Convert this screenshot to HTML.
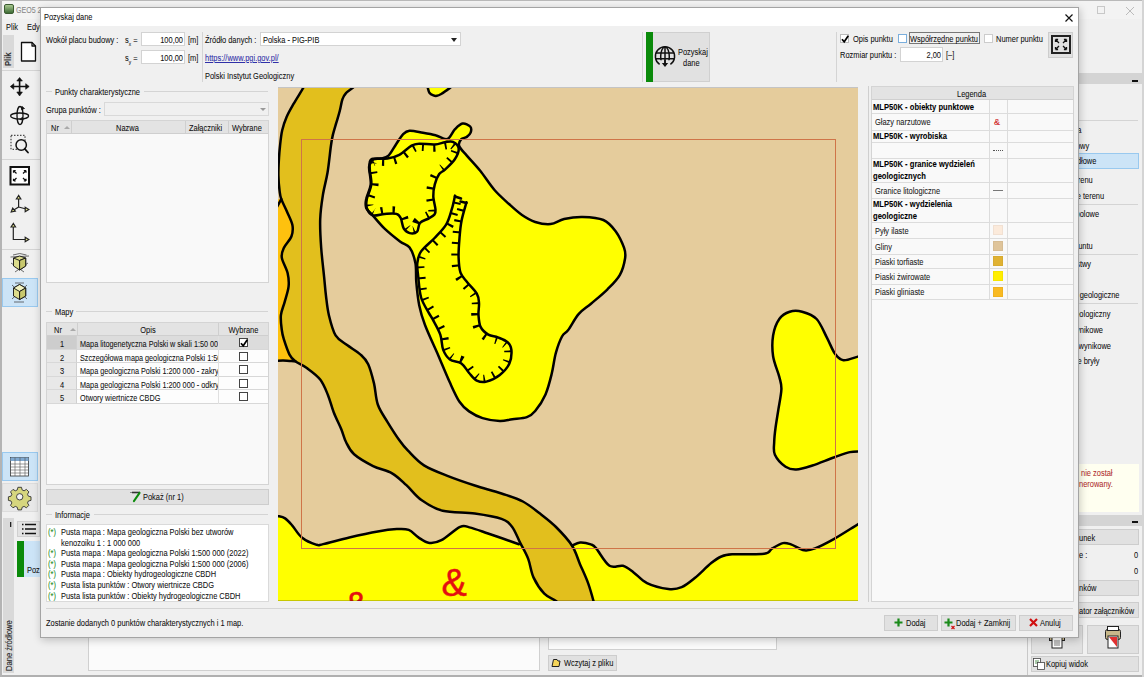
<!DOCTYPE html>
<html><head><meta charset="utf-8">
<style>
*{box-sizing:border-box;margin:0;padding:0}
html,body{width:1144px;height:677px;overflow:hidden;background:#f0f0f0;font-family:"Liberation Sans",sans-serif;font-size:9.5px;color:#111}
.a{position:absolute}
.t{position:absolute;white-space:nowrap;line-height:10px;transform:scaleX(.785);transform-origin:0 0;-webkit-text-stroke:0.07px currentColor}
.r{transform-origin:100% 0}
.c{transform-origin:50% 0;text-align:center}
.inp{position:absolute;background:#fff;border:1px solid #d3d3d3}
.btn{position:absolute;background:#e1e1e1;border:1px solid #cdcdcd}
.hl{position:absolute;background:#cce4f7;border:1px solid #99c9ef}
.vl{position:absolute;width:1px;background:#d4d4d4}
.hln{position:absolute;height:1px;background:#d4d4d4}
.cb{position:absolute;width:9px;height:9px;background:#fff;border:1px solid #333}
</style></head><body>
<!-- ===== background app ===== -->
<div class="a" style="left:0;top:0;width:1144px;height:1px;background:#b9b9b9"></div>
<div class="a" style="left:0;top:1px;width:1144px;height:18px;background:#f3f3f3"></div>
<div class="a" style="left:0;top:675px;width:1144px;height:2px;background:#b0b0b0"></div>
<div class="a" style="left:0;top:0;width:2px;height:677px;background:#b4b4b4"></div>
<div class="a" style="left:1142px;top:0;width:2px;height:677px;background:#d4d4d4"></div>

<!-- app icon + title -->
<div class="a" style="left:4px;top:4px;width:10px;height:10px;border-radius:2px;background:linear-gradient(#a8c890,#3d6b35);border:1px solid #3a5a30"></div>
<div class="t" style="left:16px;top:5px;font-size:9px;color:#888">GEO5 2</div>
<div class="t" style="left:6px;top:22px;">Plik</div>
<div class="t" style="left:27px;top:22px;">Edyc</div>
<!-- right titlebar -->
<div class="a" style="left:1097px;top:6px;width:8px;height:8px;border:1px solid #c8c8c8"></div>
<svg class="a" style="left:1125px;top:6px" width="10" height="10"><path d="M1,1 L9,9 M9,1 L1,9" stroke="#bbb" stroke-width="1"/></svg>

<!-- left tool strip -->
<div class="a" style="left:3px;top:35px;width:11px;height:33px;background:#d9d9d9"></div>
<div class="t" style="left:3px;top:66px;transform:rotate(-90deg) scaleX(.85);transform-origin:0 0;font-size:9px;font-weight:bold;color:#333">Plik</div>
<div class="hln" style="left:2px;top:70px;width:38px"></div>
<div class="hln" style="left:2px;top:159px;width:38px"></div>
<div class="hln" style="left:2px;top:249px;width:38px"></div>
<div class="hl" style="left:2px;top:278px;width:36px;height:29px"></div>
<div class="hl" style="left:2px;top:452px;width:36px;height:29px"></div>
<div class="a" style="left:2px;top:483px;width:36px;height:29px;background:#e8e8e8;border:1px solid #dcdcdc"></div>
<div class="a" style="left:3px;top:518px;width:11px;height:155px;background:#d9d9d9"></div>
<div class="a" style="left:17px;top:521px;width:23px;height:16px;background:#e3e3e3;border:1px solid #d0d0d0"></div>
<svg class="a" style="left:0;top:0" width="40" height="677">
<g fill="none" stroke="#111" stroke-width="1.3" stroke-linejoin="round">
<path d="M21.5,42.5 H32 L35.5,46 V61 H21.5 Z" fill="#fff"/>
<path d="M32,42.5 V46 H35.5" />
</g>
<g stroke="#111" stroke-width="1.6" fill="#111">
<path d="M19.6,80 V93 M12.5,86.5 H26.7" fill="none"/>
<path d="M19.6,77.5 L16.8,81 H22.4 Z M19.6,96 L16.8,92 H22.4 Z M10.3,86.5 L13.8,83.7 V89.3 Z M29.2,86.5 L25.7,83.7 V89.3 Z" stroke-width="0.6"/>
</g>
<g fill="none" stroke="#111" stroke-width="1.3">
<ellipse cx="19.6" cy="116" rx="9" ry="3"/>
<ellipse cx="20" cy="115.5" rx="3" ry="9"/>
</g>
<path d="M22,106.5 l2.5,2 -3,1 Z M22.5,117 l-2.5,2.5 3,0.5 Z" fill="#111" stroke="#111" stroke-width="0.8"/>
<rect x="11" y="135.3" width="14" height="14" fill="none" stroke="#222" stroke-width="1" stroke-dasharray="1.5 1.5"/>
<circle cx="21.2" cy="145" r="5.2" fill="#f0f0f0" stroke="#111" stroke-width="1.5"/>
<path d="M24.8,148.8 L28,152.5" stroke="#111" stroke-width="1.8" stroke-linecap="round"/>
<rect x="10.5" y="167" width="18.5" height="17.5" fill="#fff" stroke="#111" stroke-width="2"/>
<g stroke="#111" stroke-width="1.2" fill="none">
<path d="M13.5,170.5 l3,3 M13.5,170.5 h2.2 M13.5,170.5 v2.2"/>
<path d="M26,170.5 l-3,3 M26,170.5 h-2.2 M26,170.5 v2.2"/>
<path d="M13.5,181 l3,-3 M13.5,181 h2.2 M13.5,181 v-2.2"/>
<path d="M26,181 l-3,-3 M26,181 h-2.2 M26,181 v-2.2"/>
</g>
<g stroke="#222" stroke-width="1.2" fill="#e6e68a">
<path d="M18.6,207 V198 M18.6,207 L26,209 M18.6,207 L13,210.5" fill="none"/>
<path d="M18.6,195.5 l-2.2,3.5 h4.4 Z"/>
<path d="M28.8,209.5 l-3.6,-2.2 v4.4 Z"/>
<path d="M11.2,212 l1.5,-3.8 2.6,3 Z"/>
<path d="M13.3,226 V239.5 H26" fill="none"/>
<path d="M13.3,223.5 l-2.2,3.5 h4.4 Z"/>
<path d="M28.8,239.5 l-3.6,-2.2 v4.4 Z"/>
</g>
<g stroke="#333" stroke-width="0.7" fill="none">
<path d="M13,255 Q19.6,252 26.5,255 M10.5,257 L29,256 M11,263 L24,272 M28,263 L15,272"/>
<path d="M12,285 L27,299 M27,285 L12,299 M15,283 h9 M14,302 h10"/>
</g>
<g stroke="#111" stroke-width="0.9">
<path d="M13.5,258 L19.6,256 L25.7,258 V266 L19.6,270 L13.5,266 Z" fill="#dcdc8c"/>
<path d="M13.5,258 L19.6,260.5 L25.7,258 M19.6,260.5 V270" fill="none"/>
<path d="M19.6,260.5 L25.7,258 V266 L19.6,270 Z" fill="#c8c86e"/>
<path d="M13.5,288 L19.6,284.5 L25.7,288 V296 L19.6,299.5 L13.5,296 Z" fill="#dcdc8c"/>
<path d="M13.5,288 L19.6,291.5 L25.7,288 L19.6,284.5 Z" fill="#f2f2c0"/>
<path d="M19.6,291.5 V299.5" fill="none"/>
<path d="M19.6,291.5 L25.7,288 V296 L19.6,299.5 Z" fill="#c8c86e"/>
</g>
<rect x="10.5" y="457.5" width="18" height="18.5" fill="#fff" stroke="#333" stroke-width="0.8"/>
<rect x="10.5" y="457.5" width="18" height="3.5" fill="#7fa8d0"/>
<g stroke="#555" stroke-width="0.6"><path d="M10.5,464 H28.5 M10.5,467 H28.5 M10.5,470 H28.5 M10.5,473 H28.5 M15,457.5 V476 M20,457.5 V476 M25,457.5 V476"/></g>
<g transform="translate(19.7,496.8)">
<path d="M-1.8,-9.5 h3.6 l0.6,2.6 2,0.9 2.3,-1.4 2.5,2.5 -1.4,2.3 0.9,2 2.6,0.6 v3.6 l-2.6,0.6 -0.9,2 1.4,2.3 -2.5,2.5 -2.3,-1.4 -2,0.9 -0.6,2.6 h-3.6 l-0.6,-2.6 -2,-0.9 -2.3,1.4 -2.5,-2.5 1.4,-2.3 -0.9,-2 -2.6,-0.6 v-3.6 l2.6,-0.6 0.9,-2 -1.4,-2.3 2.5,-2.5 2.3,1.4 2,-0.9 Z" fill="#d6d67e" stroke="#333" stroke-width="0.9"/>
<circle r="3.2" fill="#f4f4f4" stroke="#333" stroke-width="0.9"/>
</g>
<rect x="10" y="522" width="1.3" height="5" fill="#222"/>
<g stroke="#111" stroke-width="1.6"><path d="M25,524.5 H36 M25,529 H36 M25,533.5 H36"/><path d="M22,524.5 h1.5 M22,529 h1.5 M22,533.5 h1.5"/></g>
</svg>
<div class="t" style="left:3.5px;top:671px;transform:rotate(-90deg) scaleX(.8);transform-origin:0 0;font-size:9.5px;color:#222">Dane źródłowe</div>
<div class="a" style="left:17px;top:541px;width:7px;height:36px;background:#0a8a0a"></div>
<div class="a" style="left:24px;top:541px;width:16px;height:36px;background:#cce4f7"></div>
<div class="t" style="left:27px;top:565px;">Poz</div>

<!-- right background panel -->
<div class="a" style="left:1079px;top:73px;width:63px;height:11px;background:#d4d4d4"></div>
<div class="a" style="left:1132px;top:80px;width:6px;height:2px;background:#111"></div>
<div class="hln" style="left:1079px;top:120px;width:59px"></div>
<div class="hl" style="left:1070px;top:153px;width:69px;height:16px"></div>
<div class="hln" style="left:1079px;top:204px;width:59px"></div>
<div class="hln" style="left:1079px;top:254px;width:59px"></div>
<div class="hln" style="left:1079px;top:303px;width:59px"></div>
<div class="t r" style="right:62.2px;top:125.1px;">Oblasti a</div>
<div class="t r" style="right:55.1px;top:141.0px;">Podkładowy</div>
<div class="t r" style="right:47.3px;top:156.4px;">Dane źródłowe</div>
<div class="t r" style="right:50.8px;top:175.3px;">Modele terenu</div>
<div class="t r" style="right:39.7px;top:190.7px;">Powierzchnie terenu</div>
<div class="t r" style="right:44.5px;top:208.7px;">Ostatnie polowe</div>
<div class="t r" style="right:51.4px;top:240.5px;">Przypisanie gruntu</div>
<div class="t r" style="right:52.7px;top:259.1px;">Warstwy</div>
<div class="t r" style="right:24.8px;top:290.0px;">Wydzielenia geologiczne</div>
<div class="t r" style="right:34.0px;top:309.2px;">Profil geologiczny</div>
<div class="t r" style="right:41.5px;top:324.6px;">Przekroje wynikowe</div>
<div class="t r" style="right:32.7px;top:340.6px;">Przekroje wynikowe</div>
<div class="t r" style="right:44.7px;top:356.3px;">Usunięcie bryły</div>
<div class="a" style="left:1079px;top:464px;width:60px;height:48px;background:#fffff0"></div>
<div class="t" style="left:1081px;top:468px;color:#b03030">nie został</div>
<div class="t" style="left:1079px;top:479px;color:#b03030">nerowany.</div>
<div class="a" style="left:1079px;top:515px;width:63px;height:11px;background:#d4d4d4"></div>
<div class="a" style="left:1132px;top:521px;width:6px;height:2px;background:#111"></div>
<div class="btn" style="left:1031px;top:529px;width:108px;height:16px"></div>
<div class="t" style="left:1079px;top:533px;">unek</div>
<div class="t" style="left:1079px;top:550px;">e :</div>
<div class="t" style="left:1134px;top:550px;">0</div>
<div class="t" style="left:1134px;top:566px;">0</div>
<div class="btn" style="left:1031px;top:580px;width:108px;height:16px"></div>
<div class="t" style="left:1079px;top:583px;">nków</div>
<div class="btn" style="left:1031px;top:602px;width:108px;height:16px"></div>
<div class="t" style="left:1079px;top:606px;">ator załączników</div>
<div class="btn" style="left:1031px;top:625px;width:52px;height:29px"></div>
<div class="btn" style="left:1087px;top:625px;width:52px;height:29px"></div>
<div class="btn" style="left:1031px;top:656px;width:108px;height:16px"></div>
<div class="t" style="left:1046px;top:659px;">Kopiuj widok</div>
<div class="vl" style="left:1027px;top:630px;height:45px;background:#c8c8c8"></div>

<!-- bottom middle background -->
<div class="a" style="left:88px;top:630px;width:452px;height:41px;background:#fbfbfb;border:1px solid #d0d0d0"></div>
<div class="a" style="left:548px;top:630px;width:229px;height:20px;background:#fbfbfb;border:1px solid #d0d0d0"></div>
<div class="btn" style="left:548px;top:655px;width:69px;height:16px"></div>
<div class="t" style="left:564px;top:658px;">Wczytaj z pliku</div>

<svg class="a" style="left:1046px;top:626px" width="80" height="26">
<g stroke="#222" stroke-width="1">
<rect x="3.5" y="6.5" width="15" height="8" fill="#c8b88a"/>
<rect x="6" y="11" width="10" height="11" fill="#fff"/>
<path d="M8,15 h6 M8,17 h6 M8,19 h6" stroke-width="0.6"/>
<rect x="59.5" y="3.5" width="15" height="10" rx="2" fill="#c8b88a"/>
<rect x="61.5" y="0.5" width="11" height="4" fill="#fff"/>
<rect x="62" y="10" width="10" height="12" fill="#fff"/>
</g>
<path d="M63,11 L71,11 L71,21 Z" fill="#e03030"/>
</svg>
<svg class="a" style="left:1033px;top:658px" width="12" height="12">
<rect x="0.5" y="0.5" width="7" height="8" fill="#fff" stroke="#444" stroke-width="0.8"/>
<rect x="4.5" y="4.5" width="7" height="7" fill="#fff" stroke="#444" stroke-width="0.8"/>
<path d="M2,3 h4 M2,5 h2" stroke="#2a7a2a" stroke-width="0.8"/>
</svg>
<svg class="a" style="left:551px;top:657px" width="10" height="11">
<path d="M1,9.5 L2.5,2.5 H6 L7,4 H9 L8,9.5 Z" fill="#f5d55a" stroke="#222" stroke-width="1"/>
</svg>
<!-- ===== dialog ===== -->
<div class="a" id="dlg" style="left:40px;top:7px;width:1039px;height:631px;background:#f0f0f0;border:1px solid #a4a4a4;box-shadow:1px 2px 8px rgba(0,0,0,0.22)">
</div>
<div class="a" style="left:41px;top:8px;width:1037px;height:18px;background:#fff"></div>
<div class="t" style="left:44px;top:12px;">Pozyskaj dane</div>
<svg class="a" style="left:1064px;top:12.5px" width="10" height="10"><path d="M1.5,1.5 L8.5,8.5 M8.5,1.5 L1.5,8.5" stroke="#111" stroke-width="1.2"/></svg>

<!-- top row -->
<div class="t" style="left:46px;top:35px;">Wokół placu budowy :</div>
<div class="t" style="left:125px;top:35px;">s<sub style="font-size:6px">x</sub> =</div>
<div class="inp" style="left:141px;top:32px;width:44px;height:14px"></div>
<div class="t r" style="left:143px;top:35px;width:40px;text-align:right">100,00</div>
<div class="t" style="left:188px;top:35px;">[m]</div>
<div class="t" style="left:125px;top:53px;">s<sub style="font-size:6px">y</sub> =</div>
<div class="inp" style="left:141px;top:50px;width:44px;height:14px"></div>
<div class="t r" style="left:143px;top:53px;width:40px;text-align:right">100,00</div>
<div class="t" style="left:188px;top:53px;">[m]</div>
<div class="vl" style="left:202px;top:32px;height:50px"></div>
<div class="t" style="left:205px;top:35px;">Źródło danych :</div>
<div class="inp" style="left:260px;top:32px;width:201px;height:14px"></div>
<div class="t" style="left:263px;top:35px;">Polska - PIG-PIB</div>
<div class="a" style="left:451px;top:38px;width:0;height:0;border-left:3.5px solid transparent;border-right:3.5px solid transparent;border-top:4px solid #222"></div>
<div class="t" style="left:205px;top:53px;color:#3030a8;text-decoration:underline">https://www.pgi.gov.pl/</div>
<div class="t" style="left:205px;top:71px;">Polski Instytut Geologiczny</div>
<div class="vl" style="left:642px;top:32px;height:50px"></div>
<div class="a" style="left:646px;top:32px;width:64px;height:50px;background:#e1e1e1;border:1px solid #d0d0d0"></div>
<div class="a" style="left:646px;top:32px;width:7px;height:50px;background:#0a8a0a"></div>
<svg class="a" style="left:654px;top:45.5px" width="22" height="23">
<defs><clipPath id="gc"><rect x="0" y="0" width="22" height="14.2"/></clipPath></defs>
<g fill="none" stroke="#111" stroke-width="1.5">
<path d="M5.6,18.4 A9.6,9.6 0 1 1 16.4,18.4"/>
<g clip-path="url(#gc)"><ellipse cx="11" cy="10.5" rx="4.3" ry="9.6"/><path d="M11,0.5 V14"/></g>
<path d="M1.8,7 H20.2 M1.6,12.8 H20.4"/>
</g>
<path d="M11,14 V18" stroke="#111" stroke-width="1.9"/>
<path d="M7.8,17 H14.2 L11,21 Z" fill="#111"/>
</svg>
<div class="t" style="left:678px;top:47px;">Pozyskaj</div>
<div class="t" style="left:683px;top:58px;">dane</div>
<div class="vl" style="left:836px;top:32px;height:50px"></div>
<div class="cb" style="left:840px;top:34px;border-color:#bbb"></div>
<svg class="a" style="left:840px;top:34px" width="10" height="10"><path d="M2,5.2 L4.2,7.8 L8.3,1.8" fill="none" stroke="#000" stroke-width="1.7"/></svg>
<div class="t" style="left:853px;top:34px;">Opis punktu</div>
<div class="cb" style="left:898px;top:34px;border-color:#7aaedc"></div>
<div class="a" style="left:909px;top:32px;width:71px;height:12px;border:1px solid #777"></div>
<div class="t" style="left:910px;top:34px;">Współrzędne punktu</div>
<div class="cb" style="left:984px;top:34px;border-color:#ccc"></div>
<div class="t" style="left:996px;top:34px;">Numer punktu</div>
<div class="t" style="left:840px;top:50px;">Rozmiar punktu :</div>
<div class="inp" style="left:900px;top:47px;width:43px;height:15px"></div>
<div class="t r" style="left:902px;top:50px;width:39px;text-align:right">2,00</div>
<div class="t" style="left:946px;top:50px;">[–]</div>
<div class="a" style="left:1048px;top:32px;width:25px;height:26px;background:#e1e1e1;border:1px solid #cdcdcd"></div>
<div class="a" style="left:1051px;top:35px;width:20px;height:19px;border:2px solid #222"></div>
<svg class="a" style="left:1051px;top:35px" width="20" height="19">
<g stroke="#111" stroke-width="1.3" fill="none">
<path d="M4.5,4.5 l3.5,3.5 M4.5,4.5 h2.6 M4.5,4.5 v2.6"/>
<path d="M15.5,4.5 l-3.5,3.5 M15.5,4.5 h-2.6 M15.5,4.5 v2.6"/>
<path d="M4.5,14.5 l3.5,-3.5 M4.5,14.5 h2.6 M4.5,14.5 v-2.6"/>
<path d="M15.5,14.5 l-3.5,-3.5 M15.5,14.5 h-2.6 M15.5,14.5 v-2.6"/>
</g></svg>

<!-- left panel -->
<div class="hln" style="left:46px;top:91px;width:6px"></div>
<div class="t" style="left:55px;top:87px;">Punkty charakterystyczne</div>
<div class="hln" style="left:144px;top:91px;width:124px"></div>
<div class="t" style="left:46px;top:105px;">Grupa punktów :</div>
<div class="a" style="left:104px;top:102px;width:165px;height:14px;border:1px solid #d9d9d9;background:#f0f0f0"></div>
<div class="a" style="left:260px;top:108px;width:0;height:0;border-left:3px solid transparent;border-right:3px solid transparent;border-top:3px solid #999"></div>

<div class="a" style="left:46px;top:120px;width:223px;height:163px;background:#f9f9f9;border:1px solid #d4d4d4"></div>
<div class="a" style="left:47px;top:121px;width:221px;height:13px;background:#e3e3e3;border-bottom:1px solid #cfcfcf"></div>
<div class="vl" style="left:71px;top:121px;height:13px;background:#cfcfcf"></div>
<div class="vl" style="left:185px;top:121px;height:13px;background:#cfcfcf"></div>
<div class="vl" style="left:228px;top:121px;height:13px;background:#cfcfcf"></div>
<div class="t" style="left:51px;top:123px;">Nr</div>
<div class="t" style="left:116px;top:123px;">Nazwa</div>
<div class="t" style="left:189px;top:123px;">Załączniki</div>
<div class="t" style="left:232px;top:123px;">Wybrane</div>

<div class="hln" style="left:46px;top:311px;width:6px"></div>
<div class="t" style="left:55px;top:307px;">Mapy</div>
<div class="hln" style="left:76px;top:311px;width:192px"></div>
<div class="a" style="left:46px;top:322px;width:223px;height:163px;background:#f9f9f9;border:1px solid #d4d4d4"></div>
<div class="a" style="left:47px;top:323px;width:221px;height:13px;background:#e3e3e3;border-bottom:1px solid #cfcfcf"></div>

<div class="btn" style="left:46px;top:489px;width:223px;height:16px"></div>
<div class="t" style="left:143px;top:492px;">Pokaż (nr 1)</div>

<div class="hln" style="left:46px;top:514px;width:6px"></div>
<div class="t" style="left:55px;top:510px;">Informacje</div>
<div class="hln" style="left:94px;top:514px;width:174px"></div>
<div class="a" style="left:46px;top:524px;width:223px;height:78px;background:#fff;border:1px solid #dadada"></div>

<div class="hln" style="left:46px;top:608px;width:1027px"></div>
<div class="t" style="left:46px;top:618px;">Zostanie dodanych 0 punktów charakterystycznych i 1 map.</div>

<!-- map -->
<!--MAPSTART--><svg class="a" style="left:278px;top:87px" width="580" height="514" viewBox="278 87 580 514">
<defs>
<clipPath id="cp1"><path d="M371.3,159.2 C374.2,157.3 382.8,159.2 387.5,158.5 C392.2,157.8 395.4,156.9 399.3,154.8 C403.2,152.7 408.0,147.8 411.2,145.9 C414.4,144.1 414.6,143.9 418.5,143.7 C422.4,143.4 430.4,144.7 434.8,144.4 C439.2,144.2 442.0,142.6 445.0,142.2 C448.0,141.8 450.6,140.8 452.9,141.9 C455.2,143.0 458.4,145.7 458.7,148.6 C459.0,151.5 457.1,155.7 454.8,159.2 C452.5,162.7 447.6,167.1 445.0,169.6 C442.4,172.1 440.9,171.6 439.2,174.0 C437.5,176.4 435.8,180.6 434.8,184.3 C433.8,188.0 433.2,192.0 433.3,196.2 C433.4,200.4 435.3,206.4 435.5,209.5 C435.7,212.6 435.6,213.0 434.5,214.5 C433.4,216.0 431.3,216.9 428.9,218.3 C426.5,219.7 422.0,220.6 420.0,222.8 C418.0,225.0 418.8,229.9 417.1,231.6 C415.4,233.3 411.9,233.6 409.7,233.1 C407.5,232.6 405.3,231.2 403.8,228.7 C402.3,226.2 402.0,220.8 400.8,218.3 C399.6,215.8 399.1,214.6 396.4,213.9 C393.7,213.2 388.6,213.7 384.6,213.9 C380.7,214.2 375.7,216.4 372.7,215.4 C369.7,214.4 367.8,210.7 366.8,208.0 C365.8,205.3 366.1,203.0 366.8,199.1 C367.6,195.2 370.8,189.2 371.3,184.3 C371.8,179.4 369.8,173.8 369.8,169.6 C369.8,165.4 368.4,161.0 371.3,159.2 Z"/></clipPath>
<clipPath id="cp2"><path d="M455.0,195.6 C452.6,196.8 453.3,204.4 451.8,209.2 C450.3,214.0 449.0,219.8 446.1,224.6 C443.2,229.4 438.8,233.5 434.6,238.0 C430.4,242.5 424.0,247.2 421.1,251.4 C418.2,255.6 417.8,258.8 417.3,263.0 C416.8,267.2 417.6,270.6 418.2,276.4 C418.8,282.1 419.3,291.4 421.1,297.5 C422.9,303.6 426.9,309.3 428.8,312.9 C430.7,316.5 430.7,315.6 432.6,319.2 C434.5,322.8 438.5,329.5 440.3,334.6 C442.1,339.7 441.6,345.8 443.2,349.9 C444.8,354.0 446.9,357.2 449.9,359.5 C452.9,361.8 458.2,361.1 461.4,363.4 C464.6,365.6 466.5,370.1 469.1,373.0 C471.7,375.9 473.9,379.2 476.8,380.6 C479.7,382.0 482.6,382.6 486.4,381.6 C490.2,380.7 496.0,377.9 499.8,374.9 C503.6,371.9 507.5,367.6 509.4,363.4 C511.3,359.2 511.7,353.4 511.4,349.9 C511.1,346.4 509.8,344.3 507.5,342.2 C505.2,340.1 501.1,338.7 497.9,337.4 C494.7,336.1 491.2,336.4 488.3,334.6 C485.4,332.9 482.2,330.2 480.6,326.9 C479.0,323.6 478.8,319.0 478.5,315.0 C478.2,311.0 479.3,306.6 479.0,303.0 C478.7,299.4 478.8,297.2 476.8,293.7 C474.8,290.2 469.9,285.7 467.2,282.2 C464.5,278.7 461.9,276.8 460.5,272.6 C459.1,268.4 458.8,263.0 458.6,257.2 C458.4,251.4 459.0,244.1 459.5,238.0 C460.0,231.9 460.4,226.4 461.6,220.5 C462.8,214.6 467.6,206.5 466.5,202.3 C465.4,198.2 457.4,194.4 455.0,195.6 Z"/></clipPath>
</defs>
<rect x="278" y="87" width="581" height="515" fill="#e5cc9c"/>
<path d="M275.0,516.0 C275.5,516.0 276.3,515.7 278.0,516.1 C279.7,516.5 282.7,516.8 285.1,518.4 C287.5,520.0 289.5,522.4 292.3,525.6 C295.1,528.8 297.9,534.3 301.8,537.5 C305.8,540.7 312.4,543.5 316.0,544.6 C319.6,545.7 317.6,545.3 323.2,544.1 C328.8,542.9 340.2,539.6 349.3,537.5 C358.4,535.4 369.9,532.9 377.8,531.5 C385.7,530.1 391.7,529.4 396.8,529.1 C401.9,528.8 405.1,528.5 408.7,529.9 C412.3,531.3 415.2,535.4 418.7,537.6 C422.1,539.8 425.6,542.5 429.4,542.9 C433.2,543.3 436.3,542.9 441.4,540.2 C446.5,537.5 455.4,529.0 460.1,526.9 C464.8,524.8 464.7,526.3 469.4,527.4 C474.1,528.5 479.9,530.7 488.1,533.5 C496.4,536.3 509.4,542.3 518.9,544.2 C528.4,546.1 536.1,544.8 545.0,545.0 C553.9,545.2 566.2,546.1 572.1,545.7 C578.0,545.3 577.0,542.7 580.1,542.5 C583.2,542.3 588.1,543.4 590.8,544.4 C593.5,545.4 593.1,544.8 596.2,548.4 C599.3,552.0 605.0,562.9 609.5,565.8 C614.0,568.7 618.9,564.7 622.9,565.8 C626.9,566.9 629.6,569.5 633.6,572.4 C637.6,575.3 641.2,580.3 647.0,583.1 C652.8,585.9 662.6,588.3 668.4,589.0 C674.2,589.7 677.2,589.1 681.7,587.2 C686.2,585.3 690.2,581.8 695.1,577.8 C700.0,573.8 706.8,566.6 711.2,563.1 C715.6,559.6 717.9,558.0 721.4,556.5 C724.9,555.0 725.0,554.8 732.1,554.3 C739.2,553.8 757.5,554.8 764.2,553.8 C770.9,552.8 769.1,550.2 772.2,548.4 C775.3,546.6 779.8,543.8 782.9,543.1 C786.0,542.4 787.4,543.2 791.0,544.4 C794.6,545.6 800.3,549.6 804.3,550.3 C808.3,551.0 810.1,550.3 815.0,548.4 C819.9,546.5 826.6,543.1 833.8,539.1 C840.9,535.1 853.2,527.1 857.9,524.3 C862.6,521.4 861.3,522.4 862.0,522.0 L862,610 L275,610 Z" fill="#ffff00"/>
<path d="M369.5,165.1 C370.2,163.4 371.4,160.5 373.3,159.4 C375.2,158.3 378.4,159.1 380.9,158.5 C383.4,157.9 386.0,158.0 388.5,155.6 C391.0,153.2 393.7,147.7 396.1,144.2 C398.5,140.7 400.6,136.8 402.8,134.6 C405.0,132.4 406.1,131.1 409.5,130.8 C412.9,130.5 418.6,132.0 423.0,132.7 C427.4,133.4 431.6,134.1 435.6,135.2 C439.6,136.2 444.0,140.0 447.2,139.0 C450.4,138.0 452.2,132.0 454.8,129.4 C457.4,126.8 459.9,124.1 462.5,123.6 C465.1,123.1 468.8,125.0 470.2,126.5 C471.6,128.0 471.2,131.0 470.6,132.7 C470.0,134.4 468.4,135.8 466.8,136.9 C465.2,138.0 462.4,137.9 461.1,139.4 C459.8,140.9 458.2,143.3 459.2,146.0 C460.1,148.7 463.3,151.5 466.8,155.6 C470.3,159.7 475.6,165.1 480.2,170.8 C484.8,176.5 489.7,184.5 494.5,190.0 C499.3,195.5 504.4,199.8 509.0,204.0 C513.6,208.2 517.6,212.0 522.0,215.0 C526.4,218.0 530.4,220.5 535.2,222.0 C540.0,223.5 545.9,224.6 550.7,224.1 C555.5,223.6 558.8,220.2 564.1,219.0 C569.4,217.8 576.2,216.7 582.7,216.9 C589.2,217.1 597.9,217.6 603.4,220.0 C608.9,222.4 612.3,226.8 615.8,231.4 C619.2,236.1 622.5,243.4 624.1,247.9 C625.7,252.4 625.8,253.7 625.1,258.2 C624.4,262.7 622.8,269.6 619.9,274.8 C617.0,280.0 612.3,284.5 607.5,289.3 C602.7,294.1 595.8,299.6 591.0,303.7 C586.2,307.8 582.4,309.7 578.6,314.1 C574.8,318.5 571.0,326.3 568.2,330.0 C565.4,333.7 564.1,332.6 562.0,336.5 C559.9,340.4 557.5,346.9 555.8,353.1 C554.1,359.3 553.4,366.9 551.7,373.8 C550.0,380.7 548.2,388.2 545.5,394.4 C542.8,400.6 538.3,407.2 535.2,411.0 C532.1,414.8 530.7,415.8 526.9,417.2 C523.1,418.6 516.9,418.7 512.4,419.3 C507.9,419.9 504.8,421.2 499.8,421.0 C494.8,420.8 487.7,419.7 482.6,418.1 C477.5,416.5 473.0,414.1 469.1,411.4 C465.2,408.7 462.7,406.6 459.5,401.8 C456.3,397.0 453.4,390.3 449.9,382.6 C446.4,374.9 442.5,365.3 438.4,355.7 C434.2,346.1 428.2,333.4 425.0,325.0 C421.8,316.6 420.6,312.3 419.2,305.2 C417.8,298.1 416.9,289.2 416.3,282.2 C415.7,275.2 416.5,268.8 415.4,263.0 C414.3,257.2 412.2,251.2 409.6,247.6 C407.0,244.0 404.2,244.7 400.0,241.5 C395.8,238.3 389.4,233.3 384.6,228.7 C379.9,224.1 374.6,217.4 371.5,214.0 C368.4,210.6 367.1,210.5 366.2,208.0 C365.3,205.5 365.4,202.9 366.2,199.0 C366.9,195.1 370.2,189.2 370.7,184.3 C371.2,179.4 369.4,172.8 369.2,169.6 C369.0,166.4 368.8,166.8 369.5,165.1 Z" fill="#ffff00"/>
<path d="M862.0,356.0 C861.3,356.1 861.0,355.9 857.9,356.6 C854.8,357.3 847.3,360.7 843.5,360.3 C839.7,359.9 838.0,357.9 835.2,354.1 C832.4,350.3 830.0,343.5 826.9,337.6 C823.8,331.8 820.7,323.3 816.6,319.0 C812.5,314.7 806.6,312.9 802.1,311.7 C797.6,310.5 793.5,310.5 789.7,311.7 C785.9,312.9 782.1,315.0 779.3,319.0 C776.5,323.0 774.1,329.3 773.1,335.5 C772.1,341.7 772.1,349.3 773.1,356.2 C774.1,363.1 777.9,371.4 779.3,376.9 C780.7,382.4 781.6,383.8 781.4,389.3 C781.2,394.8 779.3,403.6 778.3,410.0 C777.3,416.4 776.2,422.7 775.5,428.0 C774.8,433.3 774.3,437.5 774.2,442.0 C774.1,446.5 773.0,450.7 774.9,454.8 C776.8,458.9 782.0,464.4 785.6,466.8 C789.2,469.2 791.8,469.7 796.3,469.5 C800.8,469.3 806.1,467.5 812.4,465.5 C818.6,463.5 827.6,459.7 833.8,457.5 C840.0,455.3 845.1,453.1 849.8,452.1 C854.5,451.1 860.0,451.6 862.0,451.5 Z" fill="#ffff00"/>
<path d="M426.0,84.0 C426.3,84.6 427.1,86.0 427.7,87.5 C428.3,89.0 428.4,91.4 429.4,92.7 C430.3,94.0 432.1,94.9 433.4,95.4 C434.6,95.9 435.6,96.0 436.9,95.8 C438.2,95.6 439.8,94.8 441.2,94.0 C442.6,93.2 444.1,92.1 445.6,91.0 C447.1,89.9 449.2,88.7 450.4,87.5 C451.6,86.3 452.6,84.6 453.0,84.0 Z" fill="#ffff00"/>
<path d="M270,199 L281.3,199.2 C282.2,201.2 284.9,206.7 286.7,211.0 C288.5,215.3 291.6,220.8 292.4,225.0 C293.2,229.2 292.8,232.7 291.4,236.5 C290.0,240.3 285.4,244.5 283.8,248.0 C282.2,251.5 281.2,253.4 281.8,257.6 C282.4,261.8 286.5,268.2 287.6,273.0 C288.7,277.8 289.1,281.6 288.6,286.4 C288.1,291.2 286.0,297.0 284.7,301.8 C283.4,306.6 281.4,310.5 280.9,315.2 C280.4,319.9 281.3,326.0 281.8,330.0 C282.3,334.0 282.5,335.1 283.8,339.2 C285.1,343.3 287.6,350.9 289.5,354.6 C291.4,358.3 294.3,360.2 295.3,361.3 L270,361.3 Z" fill="#fec10e"/>
<path d="M304.5,84.0 C304.3,84.6 305.3,84.2 303.5,87.5 C301.7,90.8 296.5,98.8 293.7,103.7 C290.9,108.6 288.5,112.6 286.6,117.0 C284.7,121.4 283.3,125.5 282.2,130.3 C281.1,135.1 280.5,141.4 280.0,146.0 C279.5,150.6 279.3,152.9 279.0,157.8 C278.7,162.7 278.3,170.0 278.4,175.5 C278.5,181.0 279.1,187.0 279.6,190.9 C280.1,194.8 280.1,195.8 281.3,199.2 C282.5,202.5 284.9,206.7 286.7,211.0 C288.5,215.3 291.6,220.8 292.4,225.0 C293.2,229.2 292.8,232.7 291.4,236.5 C290.0,240.3 285.4,244.5 283.8,248.0 C282.2,251.5 281.2,253.4 281.8,257.6 C282.4,261.8 286.5,268.2 287.6,273.0 C288.7,277.8 289.1,281.6 288.6,286.4 C288.1,291.2 286.0,297.0 284.7,301.8 C283.4,306.6 281.4,310.5 280.9,315.2 C280.4,319.9 281.3,326.0 281.8,330.0 C282.3,334.0 282.5,335.1 283.8,339.2 C285.1,343.3 287.6,350.9 289.5,354.6 C291.4,358.3 292.4,359.1 295.3,361.3 C298.2,363.5 302.7,365.0 306.8,368.0 C310.9,371.0 316.7,375.0 320.2,379.5 C323.7,384.0 325.6,389.4 327.9,394.9 C330.1,400.3 331.4,406.4 333.7,412.2 C335.9,417.9 339.3,424.4 341.4,429.4 C343.4,434.4 343.9,437.9 346.0,442.0 C348.1,446.1 349.6,450.3 354.1,454.3 C358.6,458.3 366.8,462.9 373.1,466.1 C379.4,469.3 386.6,470.1 392.1,473.3 C397.7,476.5 401.5,480.7 406.4,485.2 C411.3,489.7 415.3,495.8 421.4,500.1 C427.4,504.4 433.8,508.6 442.7,510.8 C451.6,513.0 465.0,512.1 474.8,513.5 C484.6,514.9 495.3,516.7 501.5,518.9 C507.7,521.1 509.1,522.9 512.2,526.9 C515.3,530.9 517.5,537.6 520.2,542.9 C522.9,548.2 526.0,553.1 528.2,558.9 C530.4,564.7 530.9,571.8 533.6,577.6 C536.3,583.4 540.6,589.8 544.3,593.7 C548.0,597.6 552.4,598.3 556.0,601.0 C559.6,603.7 564.3,608.5 566.0,610.0 L596,612 C595.6,610.2 594.8,605.8 593.5,601.0 C592.2,596.2 590.3,589.2 588.1,583.1 C585.9,577.0 582.8,570.6 580.1,564.4 C577.4,558.2 576.1,551.9 572.1,545.7 C568.1,539.5 561.4,532.4 556.0,527.0 C550.6,521.6 545.5,517.9 540.0,513.6 C534.5,509.4 529.3,504.9 522.9,501.5 C516.5,498.1 509.5,496.2 501.5,493.5 C493.5,490.8 483.7,488.4 474.8,485.5 C465.9,482.6 456.6,479.5 448.1,476.1 C439.6,472.8 430.7,469.6 424.0,465.4 C417.3,461.2 412.1,454.9 408.0,450.7 C403.9,446.5 402.6,444.8 399.2,440.0 C395.8,435.2 391.0,427.7 387.4,421.8 C383.8,415.9 380.0,410.9 377.8,404.5 C375.6,398.1 375.6,390.1 374.0,383.4 C372.4,376.7 370.4,369.0 368.2,364.2 C366.0,359.4 364.1,357.8 360.6,354.6 C357.1,351.4 351.3,348.2 347.1,345.0 C342.9,341.8 338.6,340.4 335.6,335.4 C332.6,330.4 330.5,321.8 328.9,315.2 C327.3,308.6 326.8,302.4 326.0,296.0 C325.2,289.6 324.9,284.8 324.1,276.8 C323.3,268.8 321.9,257.6 321.2,248.0 C320.5,238.4 319.9,227.9 320.2,219.2 C320.5,210.5 321.6,203.3 322.8,195.6 C324.0,187.8 326.1,181.0 327.5,172.7 C328.9,164.4 330.0,152.2 330.9,146.0 C331.8,139.8 331.8,139.4 332.7,135.6 C333.6,131.8 335.0,127.3 336.2,123.2 C337.4,119.1 338.8,114.8 339.8,110.8 C340.8,106.8 341.4,102.2 342.4,99.3 C343.4,96.3 344.2,95.1 346.0,93.1 C347.8,91.1 351.4,89.0 353.1,87.5 C354.8,86.0 355.5,84.6 356.0,84.0 Z" fill="#e2bf1d"/>
<g fill="none" stroke="#000" stroke-width="2.5" stroke-linejoin="round" stroke-linecap="round">
<path d="M275.0,516.0 C275.5,516.0 276.3,515.7 278.0,516.1 C279.7,516.5 282.7,516.8 285.1,518.4 C287.5,520.0 289.5,522.4 292.3,525.6 C295.1,528.8 297.9,534.3 301.8,537.5 C305.8,540.7 312.4,543.5 316.0,544.6 C319.6,545.7 317.6,545.3 323.2,544.1 C328.8,542.9 340.2,539.6 349.3,537.5 C358.4,535.4 369.9,532.9 377.8,531.5 C385.7,530.1 391.7,529.4 396.8,529.1 C401.9,528.8 405.1,528.5 408.7,529.9 C412.3,531.3 415.2,535.4 418.7,537.6 C422.1,539.8 425.6,542.5 429.4,542.9 C433.2,543.3 436.3,542.9 441.4,540.2 C446.5,537.5 455.4,529.0 460.1,526.9 C464.8,524.8 464.7,526.3 469.4,527.4 C474.1,528.5 479.9,530.7 488.1,533.5 C496.4,536.3 513.8,542.4 518.9,544.2"/>
<path d="M572.1,545.7 C573.4,545.2 577.0,542.7 580.1,542.5 C583.2,542.3 588.1,543.4 590.8,544.4 C593.5,545.4 593.1,544.8 596.2,548.4 C599.3,552.0 605.0,562.9 609.5,565.8 C614.0,568.7 618.9,564.7 622.9,565.8 C626.9,566.9 629.6,569.5 633.6,572.4 C637.6,575.3 641.2,580.3 647.0,583.1 C652.8,585.9 662.6,588.3 668.4,589.0 C674.2,589.7 677.2,589.1 681.7,587.2 C686.2,585.3 690.2,581.8 695.1,577.8 C700.0,573.8 706.8,566.6 711.2,563.1 C715.6,559.6 717.9,558.0 721.4,556.5 C724.9,555.0 725.0,554.8 732.1,554.3 C739.2,553.8 757.5,554.8 764.2,553.8 C770.9,552.8 769.1,550.2 772.2,548.4 C775.3,546.6 779.8,543.8 782.9,543.1 C786.0,542.4 787.4,543.2 791.0,544.4 C794.6,545.6 800.3,549.6 804.3,550.3 C808.3,551.0 810.1,550.3 815.0,548.4 C819.9,546.5 826.6,543.1 833.8,539.1 C840.9,535.1 853.2,527.1 857.9,524.3 C862.6,521.4 861.3,522.4 862.0,522.0"/>
<path d="M369.5,165.1 C370.2,163.4 371.4,160.5 373.3,159.4 C375.2,158.3 378.4,159.1 380.9,158.5 C383.4,157.9 386.0,158.0 388.5,155.6 C391.0,153.2 393.7,147.7 396.1,144.2 C398.5,140.7 400.6,136.8 402.8,134.6 C405.0,132.4 406.1,131.1 409.5,130.8 C412.9,130.5 418.6,132.0 423.0,132.7 C427.4,133.4 431.6,134.1 435.6,135.2 C439.6,136.2 444.0,140.0 447.2,139.0 C450.4,138.0 452.2,132.0 454.8,129.4 C457.4,126.8 459.9,124.1 462.5,123.6 C465.1,123.1 468.8,125.0 470.2,126.5 C471.6,128.0 471.2,131.0 470.6,132.7 C470.0,134.4 468.4,135.8 466.8,136.9 C465.2,138.0 462.4,137.9 461.1,139.4 C459.8,140.9 458.2,143.3 459.2,146.0 C460.1,148.7 463.3,151.5 466.8,155.6 C470.3,159.7 475.6,165.1 480.2,170.8 C484.8,176.5 489.7,184.5 494.5,190.0 C499.3,195.5 504.4,199.8 509.0,204.0 C513.6,208.2 517.6,212.0 522.0,215.0 C526.4,218.0 530.4,220.5 535.2,222.0 C540.0,223.5 545.9,224.6 550.7,224.1 C555.5,223.6 558.8,220.2 564.1,219.0 C569.4,217.8 576.2,216.7 582.7,216.9 C589.2,217.1 597.9,217.6 603.4,220.0 C608.9,222.4 612.3,226.8 615.8,231.4 C619.2,236.1 622.5,243.4 624.1,247.9 C625.7,252.4 625.8,253.7 625.1,258.2 C624.4,262.7 622.8,269.6 619.9,274.8 C617.0,280.0 612.3,284.5 607.5,289.3 C602.7,294.1 595.8,299.6 591.0,303.7 C586.2,307.8 582.4,309.7 578.6,314.1 C574.8,318.5 571.0,326.3 568.2,330.0 C565.4,333.7 564.1,332.6 562.0,336.5 C559.9,340.4 557.5,346.9 555.8,353.1 C554.1,359.3 553.4,366.9 551.7,373.8 C550.0,380.7 548.2,388.2 545.5,394.4 C542.8,400.6 538.3,407.2 535.2,411.0 C532.1,414.8 530.7,415.8 526.9,417.2 C523.1,418.6 516.9,418.7 512.4,419.3 C507.9,419.9 504.8,421.2 499.8,421.0 C494.8,420.8 487.7,419.7 482.6,418.1 C477.5,416.5 473.0,414.1 469.1,411.4 C465.2,408.7 462.7,406.6 459.5,401.8 C456.3,397.0 453.4,390.3 449.9,382.6 C446.4,374.9 442.5,365.3 438.4,355.7 C434.2,346.1 428.2,333.4 425.0,325.0 C421.8,316.6 420.6,312.3 419.2,305.2 C417.8,298.1 416.9,289.2 416.3,282.2 C415.7,275.2 416.5,268.8 415.4,263.0 C414.3,257.2 412.2,251.2 409.6,247.6 C407.0,244.0 404.2,244.7 400.0,241.5 C395.8,238.3 389.4,233.3 384.6,228.7 C379.9,224.1 374.6,217.4 371.5,214.0 C368.4,210.6 367.1,210.5 366.2,208.0 C365.3,205.5 365.4,202.9 366.2,199.0 C366.9,195.1 370.2,189.2 370.7,184.3 C371.2,179.4 369.4,172.8 369.2,169.6 C369.0,166.4 368.8,166.8 369.5,165.1 Z"/>
<path d="M862.0,356.0 C861.3,356.1 861.0,355.9 857.9,356.6 C854.8,357.3 847.3,360.7 843.5,360.3 C839.7,359.9 838.0,357.9 835.2,354.1 C832.4,350.3 830.0,343.5 826.9,337.6 C823.8,331.8 820.7,323.3 816.6,319.0 C812.5,314.7 806.6,312.9 802.1,311.7 C797.6,310.5 793.5,310.5 789.7,311.7 C785.9,312.9 782.1,315.0 779.3,319.0 C776.5,323.0 774.1,329.3 773.1,335.5 C772.1,341.7 772.1,349.3 773.1,356.2 C774.1,363.1 777.9,371.4 779.3,376.9 C780.7,382.4 781.6,383.8 781.4,389.3 C781.2,394.8 779.3,403.6 778.3,410.0 C777.3,416.4 776.2,422.7 775.5,428.0 C774.8,433.3 774.3,437.5 774.2,442.0 C774.1,446.5 773.0,450.7 774.9,454.8 C776.8,458.9 782.0,464.4 785.6,466.8 C789.2,469.2 791.8,469.7 796.3,469.5 C800.8,469.3 806.1,467.5 812.4,465.5 C818.6,463.5 827.6,459.7 833.8,457.5 C840.0,455.3 845.1,453.1 849.8,452.1 C854.5,451.1 860.0,451.6 862.0,451.5"/>
<path d="M426.0,84.0 C426.3,84.6 427.1,86.0 427.7,87.5 C428.3,89.0 428.4,91.4 429.4,92.7 C430.3,94.0 432.1,94.9 433.4,95.4 C434.6,95.9 435.6,96.0 436.9,95.8 C438.2,95.6 439.8,94.8 441.2,94.0 C442.6,93.2 444.1,92.1 445.6,91.0 C447.1,89.9 449.2,88.7 450.4,87.5 C451.6,86.3 452.6,84.6 453.0,84.0"/>
<path d="M304.5,84.0 C304.3,84.6 305.3,84.2 303.5,87.5 C301.7,90.8 296.5,98.8 293.7,103.7 C290.9,108.6 288.5,112.6 286.6,117.0 C284.7,121.4 283.3,125.5 282.2,130.3 C281.1,135.1 280.5,141.4 280.0,146.0 C279.5,150.6 279.3,152.9 279.0,157.8 C278.7,162.7 278.3,170.0 278.4,175.5 C278.5,181.0 279.1,187.0 279.6,190.9 C280.1,194.8 280.1,195.8 281.3,199.2 C282.5,202.5 284.9,206.7 286.7,211.0 C288.5,215.3 291.6,220.8 292.4,225.0 C293.2,229.2 292.8,232.7 291.4,236.5 C290.0,240.3 285.4,244.5 283.8,248.0 C282.2,251.5 281.2,253.4 281.8,257.6 C282.4,261.8 286.5,268.2 287.6,273.0 C288.7,277.8 289.1,281.6 288.6,286.4 C288.1,291.2 286.0,297.0 284.7,301.8 C283.4,306.6 281.4,310.5 280.9,315.2 C280.4,319.9 281.3,326.0 281.8,330.0 C282.3,334.0 282.5,335.1 283.8,339.2 C285.1,343.3 287.6,350.9 289.5,354.6 C291.4,358.3 292.4,359.1 295.3,361.3 C298.2,363.5 302.7,365.0 306.8,368.0 C310.9,371.0 316.7,375.0 320.2,379.5 C323.7,384.0 325.6,389.4 327.9,394.9 C330.1,400.3 331.4,406.4 333.7,412.2 C335.9,417.9 339.3,424.4 341.4,429.4 C343.4,434.4 343.9,437.9 346.0,442.0 C348.1,446.1 349.6,450.3 354.1,454.3 C358.6,458.3 366.8,462.9 373.1,466.1 C379.4,469.3 386.6,470.1 392.1,473.3 C397.7,476.5 401.5,480.7 406.4,485.2 C411.3,489.7 415.3,495.8 421.4,500.1 C427.4,504.4 433.8,508.6 442.7,510.8 C451.6,513.0 465.0,512.1 474.8,513.5 C484.6,514.9 495.3,516.7 501.5,518.9 C507.7,521.1 509.1,522.9 512.2,526.9 C515.3,530.9 517.5,537.6 520.2,542.9 C522.9,548.2 526.0,553.1 528.2,558.9 C530.4,564.7 530.9,571.8 533.6,577.6 C536.3,583.4 540.6,589.8 544.3,593.7 C548.0,597.6 552.4,598.3 556.0,601.0 C559.6,603.7 564.3,608.5 566.0,610.0"/>
<path d="M356.0,84.0 C355.5,84.6 354.8,86.0 353.1,87.5 C351.4,89.0 347.8,91.1 346.0,93.1 C344.2,95.1 343.4,96.3 342.4,99.3 C341.4,102.2 340.8,106.8 339.8,110.8 C338.8,114.8 337.4,119.1 336.2,123.2 C335.0,127.3 333.6,131.8 332.7,135.6 C331.8,139.4 331.8,139.8 330.9,146.0 C330.0,152.2 328.9,164.4 327.5,172.7 C326.1,181.0 324.0,187.8 322.8,195.6 C321.6,203.3 320.5,210.5 320.2,219.2 C319.9,227.9 320.5,238.4 321.2,248.0 C321.9,257.6 323.3,268.8 324.1,276.8 C324.9,284.8 325.2,289.6 326.0,296.0 C326.8,302.4 327.3,308.6 328.9,315.2 C330.5,321.8 332.6,330.4 335.6,335.4 C338.6,340.4 342.9,341.8 347.1,345.0 C351.3,348.2 357.1,351.4 360.6,354.6 C364.1,357.8 366.0,359.4 368.2,364.2 C370.4,369.0 372.4,376.7 374.0,383.4 C375.6,390.1 375.6,398.1 377.8,404.5 C380.0,410.9 383.8,415.9 387.4,421.8 C391.0,427.7 395.8,435.2 399.2,440.0 C402.6,444.8 403.9,446.5 408.0,450.7 C412.1,454.9 417.3,461.2 424.0,465.4 C430.7,469.6 439.6,472.8 448.1,476.1 C456.6,479.5 465.9,482.6 474.8,485.5 C483.7,488.4 493.5,490.8 501.5,493.5 C509.5,496.2 516.5,498.1 522.9,501.5 C529.3,504.9 534.5,509.4 540.0,513.6 C545.5,517.9 550.6,521.6 556.0,527.0 C561.4,532.4 568.1,539.5 572.1,545.7 C576.1,551.9 577.4,558.2 580.1,564.4 C582.8,570.6 585.9,577.0 588.1,583.1 C590.3,589.2 592.2,596.2 593.5,601.0 C594.8,605.8 595.6,610.2 596.0,612.0"/>
<path d="M295.3,361.3 C294.3,361.2 291.6,361.1 289.5,361.0 C287.4,360.9 285.2,360.6 283.0,360.6 C280.8,360.6 277.2,360.9 276.0,361.0"/>
<path d="M281.3,199.2 L277,207"/>
<path d="M371.3,159.2 C374.2,157.3 382.8,159.2 387.5,158.5 C392.2,157.8 395.4,156.9 399.3,154.8 C403.2,152.7 408.0,147.8 411.2,145.9 C414.4,144.1 414.6,143.9 418.5,143.7 C422.4,143.4 430.4,144.7 434.8,144.4 C439.2,144.2 442.0,142.6 445.0,142.2 C448.0,141.8 450.6,140.8 452.9,141.9 C455.2,143.0 458.4,145.7 458.7,148.6 C459.0,151.5 457.1,155.7 454.8,159.2 C452.5,162.7 447.6,167.1 445.0,169.6 C442.4,172.1 440.9,171.6 439.2,174.0 C437.5,176.4 435.8,180.6 434.8,184.3 C433.8,188.0 433.2,192.0 433.3,196.2 C433.4,200.4 435.3,206.4 435.5,209.5 C435.7,212.6 435.6,213.0 434.5,214.5 C433.4,216.0 431.3,216.9 428.9,218.3 C426.5,219.7 422.0,220.6 420.0,222.8 C418.0,225.0 418.8,229.9 417.1,231.6 C415.4,233.3 411.9,233.6 409.7,233.1 C407.5,232.6 405.3,231.2 403.8,228.7 C402.3,226.2 402.0,220.8 400.8,218.3 C399.6,215.8 399.1,214.6 396.4,213.9 C393.7,213.2 388.6,213.7 384.6,213.9 C380.7,214.2 375.7,216.4 372.7,215.4 C369.7,214.4 367.8,210.7 366.8,208.0 C365.8,205.3 366.1,203.0 366.8,199.1 C367.6,195.2 370.8,189.2 371.3,184.3 C371.8,179.4 369.8,173.8 369.8,169.6 C369.8,165.4 368.4,161.0 371.3,159.2 Z"/>
<path d="M455.0,195.6 C454.5,197.9 453.3,204.4 451.8,209.2 C450.3,214.0 449.0,219.8 446.1,224.6 C443.2,229.4 438.8,233.5 434.6,238.0 C430.4,242.5 424.0,247.2 421.1,251.4 C418.2,255.6 417.8,258.8 417.3,263.0 C416.8,267.2 417.6,270.6 418.2,276.4 C418.8,282.1 419.3,291.4 421.1,297.5 C422.9,303.6 426.9,309.3 428.8,312.9 C430.7,316.5 430.7,315.6 432.6,319.2 C434.5,322.8 438.5,329.5 440.3,334.6 C442.1,339.7 441.6,345.8 443.2,349.9 C444.8,354.0 446.9,357.2 449.9,359.5 C452.9,361.8 458.2,361.1 461.4,363.4 C464.6,365.6 466.5,370.1 469.1,373.0 C471.7,375.9 473.9,379.2 476.8,380.6 C479.7,382.0 482.6,382.6 486.4,381.6 C490.2,380.7 496.0,377.9 499.8,374.9 C503.6,371.9 507.5,367.6 509.4,363.4 C511.3,359.2 511.7,353.4 511.4,349.9 C511.1,346.4 509.8,344.3 507.5,342.2 C505.2,340.1 501.1,338.7 497.9,337.4 C494.7,336.1 491.2,336.4 488.3,334.6 C485.4,332.9 482.2,330.2 480.6,326.9 C479.0,323.6 478.8,319.0 478.5,315.0 C478.2,311.0 479.3,306.6 479.0,303.0 C478.7,299.4 478.8,297.2 476.8,293.7 C474.8,290.2 469.9,285.7 467.2,282.2 C464.5,278.7 461.9,276.8 460.5,272.6 C459.1,268.4 458.8,263.0 458.6,257.2 C458.4,251.4 459.0,244.1 459.5,238.0 C460.0,231.9 460.4,226.4 461.6,220.5 C462.8,214.6 465.7,205.3 466.5,202.3"/>
<path d="M455,196.5 L461,198.5 M466.5,203 L460.5,201.5"/>
</g>
<path d="M371.3,159.2 C374.2,157.3 382.8,159.2 387.5,158.5 C392.2,157.8 395.4,156.9 399.3,154.8 C403.2,152.7 408.0,147.8 411.2,145.9 C414.4,144.1 414.6,143.9 418.5,143.7 C422.4,143.4 430.4,144.7 434.8,144.4 C439.2,144.2 442.0,142.6 445.0,142.2 C448.0,141.8 450.6,140.8 452.9,141.9 C455.2,143.0 458.4,145.7 458.7,148.6 C459.0,151.5 457.1,155.7 454.8,159.2 C452.5,162.7 447.6,167.1 445.0,169.6 C442.4,172.1 440.9,171.6 439.2,174.0 C437.5,176.4 435.8,180.6 434.8,184.3 C433.8,188.0 433.2,192.0 433.3,196.2 C433.4,200.4 435.3,206.4 435.5,209.5 C435.7,212.6 435.6,213.0 434.5,214.5 C433.4,216.0 431.3,216.9 428.9,218.3 C426.5,219.7 422.0,220.6 420.0,222.8 C418.0,225.0 418.8,229.9 417.1,231.6 C415.4,233.3 411.9,233.6 409.7,233.1 C407.5,232.6 405.3,231.2 403.8,228.7 C402.3,226.2 402.0,220.8 400.8,218.3 C399.6,215.8 399.1,214.6 396.4,213.9 C393.7,213.2 388.6,213.7 384.6,213.9 C380.7,214.2 375.7,216.4 372.7,215.4 C369.7,214.4 367.8,210.7 366.8,208.0 C365.8,205.3 366.1,203.0 366.8,199.1 C367.6,195.2 370.8,189.2 371.3,184.3 C371.8,179.4 369.8,173.8 369.8,169.6 C369.8,165.4 368.4,161.0 371.3,159.2 Z" fill="none" stroke="#000" stroke-width="14.5" stroke-dasharray="2 9" clip-path="url(#cp1)"/>
<path d="M455.0,195.6 C454.5,197.9 453.3,204.4 451.8,209.2 C450.3,214.0 449.0,219.8 446.1,224.6 C443.2,229.4 438.8,233.5 434.6,238.0 C430.4,242.5 424.0,247.2 421.1,251.4 C418.2,255.6 417.8,258.8 417.3,263.0 C416.8,267.2 417.6,270.6 418.2,276.4 C418.8,282.1 419.3,291.4 421.1,297.5 C422.9,303.6 426.9,309.3 428.8,312.9 C430.7,316.5 430.7,315.6 432.6,319.2 C434.5,322.8 438.5,329.5 440.3,334.6 C442.1,339.7 441.6,345.8 443.2,349.9 C444.8,354.0 446.9,357.2 449.9,359.5 C452.9,361.8 458.2,361.1 461.4,363.4 C464.6,365.6 466.5,370.1 469.1,373.0 C471.7,375.9 473.9,379.2 476.8,380.6 C479.7,382.0 482.6,382.6 486.4,381.6 C490.2,380.7 496.0,377.9 499.8,374.9 C503.6,371.9 507.5,367.6 509.4,363.4 C511.3,359.2 511.7,353.4 511.4,349.9 C511.1,346.4 509.8,344.3 507.5,342.2 C505.2,340.1 501.1,338.7 497.9,337.4 C494.7,336.1 491.2,336.4 488.3,334.6 C485.4,332.9 482.2,330.2 480.6,326.9 C479.0,323.6 478.8,319.0 478.5,315.0 C478.2,311.0 479.3,306.6 479.0,303.0 C478.7,299.4 478.8,297.2 476.8,293.7 C474.8,290.2 469.9,285.7 467.2,282.2 C464.5,278.7 461.9,276.8 460.5,272.6 C459.1,268.4 458.8,263.0 458.6,257.2 C458.4,251.4 459.0,244.1 459.5,238.0 C460.0,231.9 460.4,226.4 461.6,220.5 C462.8,214.6 465.7,205.3 466.5,202.3" fill="none" stroke="#000" stroke-width="14.5" stroke-dasharray="2 9" stroke-dashoffset="-6" clip-path="url(#cp2)"/>
<rect x="301.5" y="139.5" width="534" height="409" fill="none" stroke="#cf7448" stroke-width="1"/>
<text x="441.5" y="595.5" font-family="Liberation Sans" font-size="38" fill="#e41010" stroke="#e41010" stroke-width="0.5">&amp;</text>
<text x="343.5" y="619" font-family="Liberation Sans" font-size="38" fill="#e41010" stroke="#e41010" stroke-width="0.5">&amp;</text>
<rect x="278" y="87" width="580" height="1" fill="#c4c4c4"/>
<rect x="278" y="600" width="580" height="1" fill="rgba(0,0,0,0.22)"/>
</svg><!--MAPEND-->

<!-- legend -->
<div class="vl" style="left:868px;top:86px;height:516px;background:#cfcfcf"></div>
<div class="a" style="left:871px;top:86px;width:203px;height:516px;background:#f9f9f9;border:1px solid #d4d4d4"></div>
<div class="a" style="left:872px;top:87px;width:201px;height:13px;background:#e3e3e3;border-bottom:1px solid #cfcfcf"></div>
<div class="t" style="left:957px;top:89px;">Legenda</div>

<!-- bottom buttons -->
<div class="btn" style="left:884px;top:615px;width:54px;height:16px"></div>
<div class="t" style="left:906px;top:618px;">Dodaj</div>
<div class="btn" style="left:941px;top:615px;width:75px;height:16px"></div>
<div class="t" style="left:956px;top:618px;">Dodaj + Zamknij</div>
<div class="btn" style="left:1019px;top:615px;width:54px;height:16px"></div>
<div class="t" style="left:1040px;top:618px;">Anuluj</div>
<div class="vl" style="left:77px;top:323px;height:13px;background:#cfcfcf"></div>
<div class="vl" style="left:218px;top:323px;height:13px;background:#cfcfcf"></div>
<div class="t" style="left:54px;top:325px;">Nr</div>
<div class="a" style="left:70px;top:328px;width:0;height:0;border-left:3px solid transparent;border-right:3px solid transparent;border-bottom:3px solid #aaa"></div>
<div class="a" style="left:47px;top:128px;width:0;height:0"></div>
<div class="a" style="left:64px;top:126px;width:0;height:0;border-left:3px solid transparent;border-right:3px solid transparent;border-bottom:3px solid #aaa"></div>
<div class="t c" style="left:110px;top:325px;width:76px">Opis</div>
<div class="t c" style="left:219px;top:325px;width:49px">Wybrane</div>
<div class="a" style="left:47px;top:336px;width:221px;height:14px;background:#dcdcdc;border-bottom:1px solid #d8d8d8"></div>
<div class="a" style="left:47px;top:336px;width:30px;height:14px;background:#cdcdcd;border-bottom:1px solid #d8d8d8;border-right:1px solid #d0d0d0"></div>
<div class="vl" style="left:218px;top:336px;height:14px;background:#e0e0e0"></div>
<div class="t c" style="left:52px;top:339px;width:20px">1</div>
<div class="a" style="left:79px;top:336px;width:139px;height:14px;overflow:hidden"><div class="t" style="left:1px;top:3px;transform:scaleX(.765)">Mapa litogenetyczna Polski w skali 1:50 000</div></div>
<div class="cb" style="left:239px;top:338px;border-color:#444"></div>
<div class="a" style="left:47px;top:350px;width:221px;height:13px;background:#fdfdfd;border-bottom:1px solid #d8d8d8"></div>
<div class="a" style="left:47px;top:350px;width:30px;height:13px;background:#e8e8e8;border-bottom:1px solid #d8d8d8;border-right:1px solid #d0d0d0"></div>
<div class="vl" style="left:218px;top:350px;height:13px;background:#e0e0e0"></div>
<div class="t c" style="left:52px;top:353px;width:20px">2</div>
<div class="a" style="left:79px;top:350px;width:139px;height:13px;overflow:hidden"><div class="t" style="left:1px;top:3px;transform:scaleX(.765)">Szczegółowa mapa geologiczna Polski 1:50 000</div></div>
<div class="cb" style="left:239px;top:352px;border-color:#444"></div>
<div class="a" style="left:47px;top:363px;width:221px;height:14px;background:#fdfdfd;border-bottom:1px solid #d8d8d8"></div>
<div class="a" style="left:47px;top:363px;width:30px;height:14px;background:#e8e8e8;border-bottom:1px solid #d8d8d8;border-right:1px solid #d0d0d0"></div>
<div class="vl" style="left:218px;top:363px;height:14px;background:#e0e0e0"></div>
<div class="t c" style="left:52px;top:366px;width:20px">3</div>
<div class="a" style="left:79px;top:363px;width:139px;height:14px;overflow:hidden"><div class="t" style="left:1px;top:3px;transform:scaleX(.765)">Mapa geologiczna Polski 1:200 000 - zakryta</div></div>
<div class="cb" style="left:239px;top:365px;border-color:#444"></div>
<div class="a" style="left:47px;top:377px;width:221px;height:13px;background:#fdfdfd;border-bottom:1px solid #d8d8d8"></div>
<div class="a" style="left:47px;top:377px;width:30px;height:13px;background:#e8e8e8;border-bottom:1px solid #d8d8d8;border-right:1px solid #d0d0d0"></div>
<div class="vl" style="left:218px;top:377px;height:13px;background:#e0e0e0"></div>
<div class="t c" style="left:52px;top:380px;width:20px">4</div>
<div class="a" style="left:79px;top:377px;width:139px;height:13px;overflow:hidden"><div class="t" style="left:1px;top:3px;transform:scaleX(.765)">Mapa geologiczna Polski 1:200 000 - odkryta</div></div>
<div class="cb" style="left:239px;top:379px;border-color:#444"></div>
<div class="a" style="left:47px;top:390px;width:221px;height:14px;background:#fdfdfd;border-bottom:1px solid #d8d8d8"></div>
<div class="a" style="left:47px;top:390px;width:30px;height:14px;background:#e8e8e8;border-bottom:1px solid #d8d8d8;border-right:1px solid #d0d0d0"></div>
<div class="vl" style="left:218px;top:390px;height:14px;background:#e0e0e0"></div>
<div class="t c" style="left:52px;top:393px;width:20px">5</div>
<div class="a" style="left:79px;top:390px;width:139px;height:14px;overflow:hidden"><div class="t" style="left:1px;top:3px;transform:scaleX(.765)">Otwory wiertnicze CBDG</div></div>
<div class="cb" style="left:239px;top:392px;border-color:#444"></div>
<svg class="a" style="left:239px;top:338px" width="10" height="10"><path d="M2,5.2 L4.2,7.8 L8.3,1.8" fill="none" stroke="#000" stroke-width="1.7"/></svg>
<svg class="a" style="left:130px;top:490px" width="12" height="13"><path d="M2,2.5 H10" stroke="#333" stroke-width="1.6"/><path d="M9.5,3 L4,11" stroke="#0a8a0a" stroke-width="2.2" stroke-linecap="round"/><rect x="0.5" y="2" width="1" height="1" fill="#333"/></svg>
<div class="t" style="left:48px;top:527.0px;color:#1e8a1e">(*)</div>
<div class="t" style="left:61px;top:527.0px;">Pusta mapa : Mapa geologiczna Polski bez utworów</div>
<div class="t" style="left:61px;top:537.6px;">kenozoiku 1 : 1 000 000</div>
<div class="t" style="left:48px;top:548.2px;color:#1e8a1e">(*)</div>
<div class="t" style="left:61px;top:548.2px;">Pusta mapa : Mapa geologiczna Polski 1:500 000 (2022)</div>
<div class="t" style="left:48px;top:558.8px;color:#1e8a1e">(*)</div>
<div class="t" style="left:61px;top:558.8px;">Pusta mapa : Mapa geologiczna Polski 1:500 000 (2006)</div>
<div class="t" style="left:48px;top:569.4px;color:#1e8a1e">(*)</div>
<div class="t" style="left:61px;top:569.4px;">Pusta mapa : Obiekty hydrogeologiczne CBDH</div>
<div class="t" style="left:48px;top:580.0px;color:#1e8a1e">(*)</div>
<div class="t" style="left:61px;top:580.0px;">Pusta lista punktów : Otwory wiertnicze CBDG</div>
<div class="t" style="left:48px;top:590.6px;color:#1e8a1e">(*)</div>
<div class="t" style="left:61px;top:590.6px;">Pusta lista punktów : Obiekty hydrogeologiczne CBDH</div>
<div class="hln" style="left:872px;top:113px;width:201px;background:#dcdcdc"></div>
<div class="vl" style="left:989px;top:100px;height:13px;background:#dcdcdc"></div>
<div class="vl" style="left:1007px;top:100px;height:13px;background:#dcdcdc"></div>
<div class="t" style="left:873px;top:100.5px;font-weight:bold;line-height:12px;color:#000;transform:scaleX(.8)">MLP50K - obiekty punktowe</div>
<div class="hln" style="left:872px;top:130px;width:201px;background:#dcdcdc"></div>
<div class="vl" style="left:989px;top:113px;height:17px;background:#dcdcdc"></div>
<div class="vl" style="left:1007px;top:113px;height:17px;background:#dcdcdc"></div>
<div class="t" style="left:875px;top:117.0px;color:#222">Głazy narzutowe</div>
<div class="t" style="left:994px;top:116.5px;color:#d02020;font-size:9px;transform:none">&amp;</div>
<div class="hln" style="left:872px;top:142px;width:201px;background:#dcdcdc"></div>
<div class="vl" style="left:989px;top:130px;height:12px;background:#dcdcdc"></div>
<div class="vl" style="left:1007px;top:130px;height:12px;background:#dcdcdc"></div>
<div class="t" style="left:873px;top:130.0px;font-weight:bold;line-height:12px;color:#000;transform:scaleX(.8)">MLP50K - wyrobiska</div>
<div class="hln" style="left:872px;top:158px;width:201px;background:#dcdcdc"></div>
<div class="vl" style="left:989px;top:142px;height:16px;background:#dcdcdc"></div>
<div class="vl" style="left:1007px;top:142px;height:16px;background:#dcdcdc"></div>
<div class="a" style="left:993px;top:150.0px;width:10px;height:1px;border-top:1px dotted #555"></div>
<div class="hln" style="left:872px;top:182px;width:201px;background:#dcdcdc"></div>
<div class="vl" style="left:989px;top:158px;height:24px;background:#dcdcdc"></div>
<div class="vl" style="left:1007px;top:158px;height:24px;background:#dcdcdc"></div>
<div class="t" style="left:873px;top:158.0px;font-weight:bold;line-height:12px;color:#000;transform:scaleX(.8)">MLP50K - granice wydzieleń<br>geologicznych</div>
<div class="hln" style="left:872px;top:198px;width:201px;background:#dcdcdc"></div>
<div class="vl" style="left:989px;top:182px;height:16px;background:#dcdcdc"></div>
<div class="vl" style="left:1007px;top:182px;height:16px;background:#dcdcdc"></div>
<div class="t" style="left:875px;top:185.5px;color:#222">Granice litologiczne</div>
<div class="a" style="left:993px;top:189.5px;width:10px;height:1.5px;background:#777"></div>
<div class="hln" style="left:872px;top:222px;width:201px;background:#dcdcdc"></div>
<div class="vl" style="left:989px;top:198px;height:24px;background:#dcdcdc"></div>
<div class="vl" style="left:1007px;top:198px;height:24px;background:#dcdcdc"></div>
<div class="t" style="left:873px;top:198.0px;font-weight:bold;line-height:12px;color:#000;transform:scaleX(.8)">MLP50K - wydzielenia<br>geologiczne</div>
<div class="hln" style="left:872px;top:238px;width:201px;background:#dcdcdc"></div>
<div class="vl" style="left:989px;top:222px;height:16px;background:#dcdcdc"></div>
<div class="vl" style="left:1007px;top:222px;height:16px;background:#dcdcdc"></div>
<div class="t" style="left:875px;top:225.5px;color:#222">Pyły ilaste</div>
<div class="a" style="left:993px;top:225.0px;width:10px;height:10px;background:#fbeadb;border:1px solid rgba(0,0,0,0.04)"></div>
<div class="hln" style="left:872px;top:254px;width:201px;background:#dcdcdc"></div>
<div class="vl" style="left:989px;top:238px;height:16px;background:#dcdcdc"></div>
<div class="vl" style="left:1007px;top:238px;height:16px;background:#dcdcdc"></div>
<div class="t" style="left:875px;top:241.5px;color:#222">Gliny</div>
<div class="a" style="left:993px;top:241.0px;width:10px;height:10px;background:#dfc49a;border:1px solid rgba(0,0,0,0.04)"></div>
<div class="hln" style="left:872px;top:268px;width:201px;background:#dcdcdc"></div>
<div class="vl" style="left:989px;top:254px;height:14px;background:#dcdcdc"></div>
<div class="vl" style="left:1007px;top:254px;height:14px;background:#dcdcdc"></div>
<div class="t" style="left:875px;top:256.5px;color:#222">Piaski torfiaste</div>
<div class="a" style="left:993px;top:256.0px;width:10px;height:10px;background:#e0b233;border:1px solid rgba(0,0,0,0.04)"></div>
<div class="hln" style="left:872px;top:284px;width:201px;background:#dcdcdc"></div>
<div class="vl" style="left:989px;top:268px;height:16px;background:#dcdcdc"></div>
<div class="vl" style="left:1007px;top:268px;height:16px;background:#dcdcdc"></div>
<div class="t" style="left:875px;top:271.5px;color:#222">Piaski żwirowate</div>
<div class="a" style="left:993px;top:271.0px;width:10px;height:10px;background:#ffee00;border:1px solid rgba(0,0,0,0.04)"></div>
<div class="hln" style="left:872px;top:299px;width:201px;background:#dcdcdc"></div>
<div class="vl" style="left:989px;top:284px;height:15px;background:#dcdcdc"></div>
<div class="vl" style="left:1007px;top:284px;height:15px;background:#dcdcdc"></div>
<div class="t" style="left:875px;top:287.0px;color:#222">Piaski gliniaste</div>
<div class="a" style="left:993px;top:286.5px;width:10px;height:10px;background:#f9ba22;border:1px solid rgba(0,0,0,0.04)"></div>
<svg class="a" style="left:894px;top:618px" width="10" height="10"><path d="M4.5,0.5 V8.5 M0.5,4.5 H8.5" stroke="#1a8a1a" stroke-width="2.2"/></svg>
<svg class="a" style="left:944px;top:618px" width="12" height="12"><path d="M4.5,0.5 V8.5 M0.5,4.5 H8.5" stroke="#1a8a1a" stroke-width="2.2"/><path d="M7.5,8 L10.5,11 M10.5,8 L7.5,11" stroke="#d01010" stroke-width="1.2"/></svg>
<svg class="a" style="left:1029px;top:618px" width="10" height="10"><path d="M1,1 L8,8 M8,1 L1,8" stroke="#d01010" stroke-width="2.2"/></svg>
</body></html>
